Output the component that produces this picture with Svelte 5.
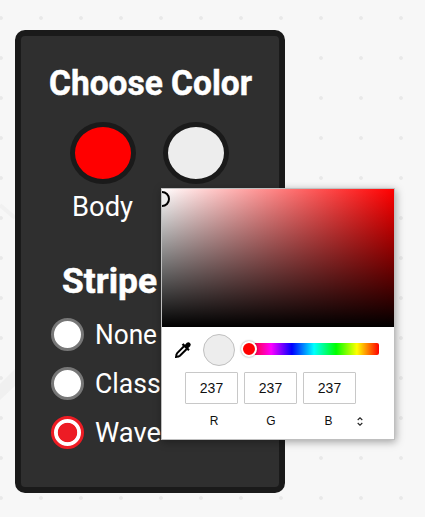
<script>
  const styles = [
    { name: 'None', width: 62, checked: false },
    { name: 'Classic', width: 86, checked: false },
    { name: 'Wave', width: 66, checked: true },
  ];
  const channels = [
    { label: 'R', value: 237 },
    { label: 'G', value: 237 },
    { label: 'B', value: 237 },
  ];
</script>

<main>
  <svg class="rays" width="425" height="517" aria-hidden="true">
    <path d="M0 205 L15 218" stroke="#f1f1f1" stroke-width="4" />
    <path d="M0 384 L15 369 V386 L0 400 Z" fill="#f0f0f0" />
  </svg>
  <section class="card">
    <svg class="title" width="206" height="40"><text x="1" y="29" textLength="203" lengthAdjust="spacingAndGlyphs">Choose Color</text></svg>
    <div class="swatches">
      <div class="choice">
        <div class="swatch red"></div>
        <svg class="label" width="62" height="34"><text x="0" y="25" textLength="61" lengthAdjust="spacingAndGlyphs">Body</text></svg>
      </div>
      <div class="choice"><div class="swatch"></div></div>
    </div>
    <svg class="title stripe" width="97" height="40"><text x="0" y="29" textLength="95" lengthAdjust="spacingAndGlyphs">Stripe</text></svg>
    <div class="radios">
      {#each styles as s}
        <div class="option">
          <span class="radio" class:checked={s.checked}></span>
          <svg class="label" width={s.width + 2} height="34"><text x="-1" y="26" textLength={s.width} lengthAdjust="spacingAndGlyphs">{s.name}</text></svg>
        </div>
      {/each}
    </div>
  </section>

  <aside class="picker">
    <div class="area"><span class="handle"></span></div>
    <div class="controls">
      <svg class="dropper" width="18" height="18" viewBox="0 0 18 18">
        <path d="M10 5.3 L3.2 12.1 Q2 13.5 2.2 15.8 Q4.5 16 5.9 14.8 L12.7 8" fill="#fff" stroke="#000" stroke-width="2" />
        <path d="M7.7 3.7 L9.4 2.3 L11 3.7 L12.8 1.8 Q14.5 .5 16 2 Q17.5 3.5 16.2 5.2 L14.3 7 L15.7 8.6 L14.2 10.1 Z" fill="#000" />
        <path d="M1 15 L3 17 L1 17 Z" />
      </svg>
      <span class="preview"></span>
      <div class="hue"><span class="knob"></span></div>
    </div>
    <div class="values">
      {#each channels as c}
        <div class="channel"><span class="value">{c.value}</span><span>{c.label}</span></div>
      {/each}
      <svg class="updown" width="6" height="9" viewBox="0 0 6 9"><path d="M.7 3 L3 .8 L5.3 3 M.7 6 L3 8.2 L5.3 6" fill="none" stroke="#222" stroke-width="1.1" /></svg>
    </div>
  </aside>
</main>

<style>
  main {
    position: relative;
    box-sizing: border-box;
    width: 425px;
    height: 517px;
    padding: 30px 15px;
    overflow: hidden;
    background: radial-gradient(circle at 20px 20px, #e9e9e9 1.4px, transparent 2.3px) -19px -2px / 40px 40px #f7f7f7;
  }
  svg { display: block; flex: none; }
  .rays { position: absolute; left: 0; top: 0; }
  .card {
    position: relative;
    box-sizing: border-box;
    width: 270px;
    height: 463px;
    padding: 30px 27px;
    border: 6px solid #1a1a1a;
    border-radius: 10px;
    background: #2f2f2f;
  }
  .title { overflow: visible; }
  .title text { font: 700 35px Roboto, sans-serif; fill: #fff; stroke: #fff; stroke-width: .5px; }
  .label { overflow: visible; }
  .label text { font: 400 27px Roboto, sans-serif; fill: #fff; }
  .swatches { display: flex; gap: 27px; margin: 16px 0 0 22px; height: 138px; }
  .choice { display: flex; flex-direction: column; align-items: center; }
  .choice .label { margin-top: 7px; }
  .swatch {
    box-sizing: border-box;
    width: 66px;
    height: 62px;
    border: 5px solid #1a1a1a;
    border-radius: 50%;
    background: #ededed;
  }
  .swatch.red { background: #f00; }
  .stripe { margin: 4px 0 0 14px; }
  .radios { display: flex; flex-direction: column; gap: 16px; margin: 14px 0 0 3px; }
  .option { display: flex; align-items: center; gap: 12px; height: 33px; }
  .radio {
    box-sizing: border-box;
    flex: none;
    width: 33px;
    height: 33px;
    border: 3px solid #777;
    border-radius: 50%;
    background: #fff;
  }
  .radio.checked { border-color: #ed1c24; background: radial-gradient(circle, #ed1c24 9.3px, #fff 10.1px); }
  .picker {
    position: absolute;
    left: 161px;
    top: 188px;
    box-sizing: border-box;
    width: 234px;
    height: 252px;
    border: 1px solid #bfbfbf;
    background: #fff;
    box-shadow: 1px 2px 8px rgba(0, 0, 0, .35);
    font: 12px "Liberation Sans", Arial, sans-serif;
    color: #101010;
  }
  .area {
    position: relative;
    height: 138px;
    overflow: hidden;
    background: linear-gradient(to top, #000, transparent), linear-gradient(to right, #fff, #f00);
  }
  .handle {
    position: absolute;
    box-sizing: border-box;
    left: -8px;
    top: 2px;
    width: 16px;
    height: 16px;
    border: 2px solid #000;
    border-radius: 50%;
    background: #ededed;
  }
  .controls { display: flex; align-items: center; height: 45px; padding-left: 12px; }
  .preview {
    box-sizing: border-box;
    width: 32px;
    height: 32px;
    margin: 1px 0 0 11px;
    border: 1px solid #c0c0c0;
    border-radius: 50%;
    background: #ededed;
  }
  .hue {
    position: relative;
    width: 130px;
    height: 12px;
    margin: 0 0 1px 14px;
    border-radius: 2px;
    background: linear-gradient(to right, #f00, #f0f 17%, #00f 33%, #0ff 50%, #0f0 67%, #ff0 83%, #f00);
  }
  .knob {
    position: absolute;
    box-sizing: border-box;
    left: -8px;
    top: -2px;
    width: 16px;
    height: 16px;
    border: 2px solid #fff;
    border-radius: 50%;
    background: #f00;
    box-shadow: 0 0 2px rgba(0, 0, 0, .45);
  }
  .values { display: flex; padding-left: 23px; gap: 6px; }
  .channel { display: flex; flex-direction: column; align-items: center; gap: 10px; }
  .channel > span:last-child { line-height: 14px; margin-left: 5px; }
  .channel:nth-child(2) > span:last-child { margin-left: 1px; }
  .channel:nth-child(3) > span:last-child { margin-left: -2px; }
  .value {
    box-sizing: border-box;
    width: 53px;
    height: 32px;
    border: 1px solid #c8c8c8;
    border-radius: 1px;
    font-size: 14px;
    line-height: 31px;
    text-align: center;
  }
  .updown { margin: 45px 0 0 -5px; }
</style>
